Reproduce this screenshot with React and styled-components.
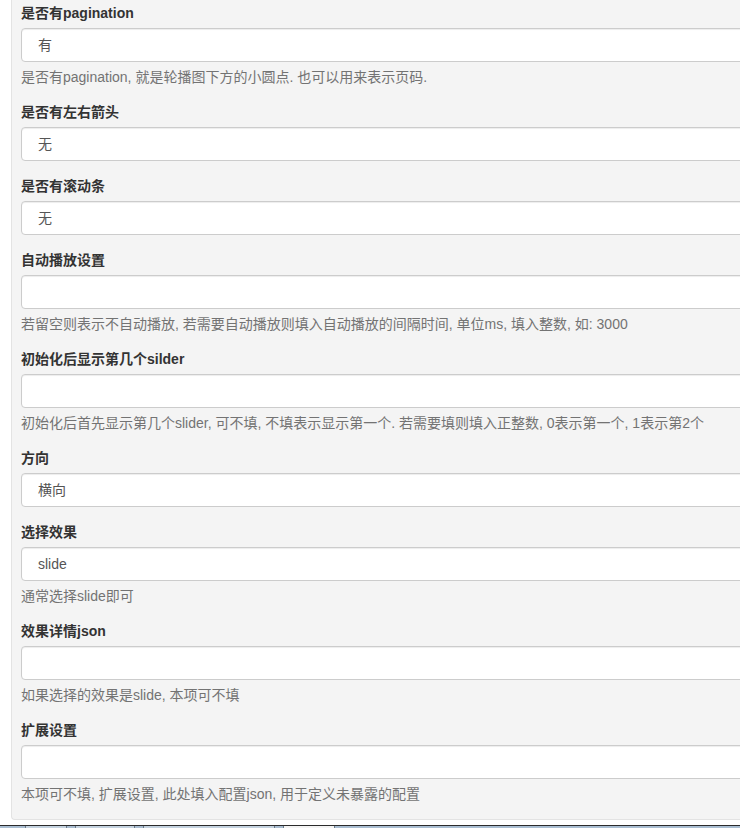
import React from 'react'
import styled, { createGlobalStyle } from 'styled-components'

const GlobalStyle = createGlobalStyle`
    html, body {
        margin: 0;
        padding: 0;
        background: #fff;
        overflow: hidden;
    }
    body {
        font-family: "Liberation Sans", "Noto Sans CJK SC", sans-serif;
        font-size: 14px;
        line-height: 20px;
        color: #333;
    }
`

const Page = styled.div`
    width: 740px;
    height: 828px;
    display: flex;
    flex-direction: column;
    overflow: hidden;
`

const Panel = styled.div`
    margin-left: 11px;
    padding: 3px 0 0 9px;
    background: #f4f4f4;
    border: 1px solid #e3e3e3;
    border-top: none;
    border-right: none;
    border-bottom-left-radius: 4px;
    overflow: hidden;
`

const FormGroup = styled.div`
    display: flex;
    flex-direction: column;
    margin-bottom: 15px;
`

const Label = styled.label`
    font-weight: bold;
    margin-bottom: 5px;
    color: #333;
`

const Field = styled.div`
    box-sizing: border-box;
    width: 800px;
    height: 34px;
    padding: 0 16px;
    display: flex;
    align-items: center;
    background: #fff;
    border: 1px solid #ccc;
    border-radius: 4px;
    box-shadow: inset 0 1px 1px rgba(0, 0, 0, 0.075);
    color: #555;
`

const Help = styled.p`
    margin: 5px 0 0;
    color: #737373;
`

const Gap = styled.div`
    flex: 1;
`

const TaskBar = styled.div`
    height: 2px;
    border-top: 1px solid #2b2b2b;
    background: #a9bdd1;
    display: flex;
    padding-left: 25px;
    gap: 8px;
`

const Tab = styled.div`
    width: ${props => props.w}px;
    height: 2px;
    background: ${props => props.active ? '#f4f4f4' : '#c4d2df'};
    border-left: 1px solid #6b7a88;
    border-right: 1px solid #6b7a88;
`

const fields = [
    { label: '是否有pagination', value: '有', help: '是否有pagination, 就是轮播图下方的小圆点. 也可以用来表示页码.' },
    { label: '是否有左右箭头', value: '无' },
    { label: '是否有滚动条', value: '无' },
    { label: '自动播放设置', value: '', help: '若留空则表示不自动播放, 若需要自动播放则填入自动播放的间隔时间, 单位ms, 填入整数, 如: 3000' },
    { label: '初始化后显示第几个silder', value: '', help: '初始化后首先显示第几个slider, 可不填, 不填表示显示第一个. 若需要填则填入正整数, 0表示第一个, 1表示第2个' },
    { label: '方向', value: '横向' },
    { label: '选择效果', value: 'slide', help: '通常选择slide即可' },
    { label: '效果详情json', value: '', help: '如果选择的效果是slide, 本项可不填' },
    { label: '扩展设置', value: '', help: '本项可不填, 扩展设置, 此处填入配置json, 用于定义未暴露的配置' },
]

export default function App() {
    return (
        <Page>
            <GlobalStyle />
            <Panel>
                {fields.map((f, i) => (
                    <FormGroup key={i}>
                        <Label>{f.label}</Label>
                        <Field>{f.value}</Field>
                        {f.help && <Help>{f.help}</Help>}
                    </FormGroup>
                ))}
            </Panel>
            <Gap />
            <TaskBar>
                <Tab w={40} />
                <Tab w={58} />
                <Tab w={130} />
                <Tab w={50} active />
            </TaskBar>
        </Page>
    )
}
